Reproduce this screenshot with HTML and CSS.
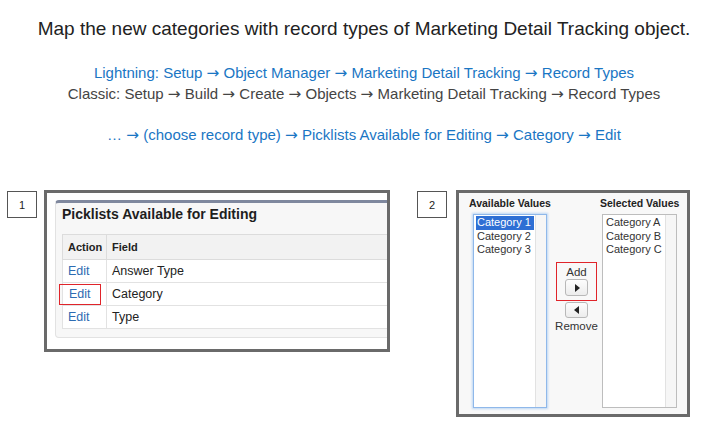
FILE: index.html
```html
<!DOCTYPE html>
<html>
<head>
<meta charset="utf-8">
<link rel="stylesheet" href="styles.css">
</head>
<body>
<div class="intro">
  <p class="title">Map the new categories with record types of Marketing Detail Tracking object.</p>
  <p class="path blue">Lightning: Setup <span class="ar">→</span> Object Manager <span class="ar">→</span> Marketing Detail Tracking <span class="ar">→</span> Record Types</p>
  <p class="path gray">Classic: Setup <span class="ar">→</span> Build <span class="ar">→</span> Create <span class="ar">→</span> Objects <span class="ar">→</span> Marketing Detail Tracking <span class="ar">→</span> Record Types</p>
  <p class="path blue last">… <span class="ar">→</span> (choose record type) <span class="ar">→</span> Picklists Available for Editing <span class="ar">→</span> Category <span class="ar">→</span> Edit</p>
</div>
<div class="steps">
  <div class="step step1">
    <div class="num">1</div>
    <div class="frame frame1">
      <div class="panel">
        <div class="panel-title">Picklists Available for Editing</div>
        <table class="pick">
          <tr class="head"><th class="c1">Action</th><th>Field</th></tr>
          <tr><td class="c1"><span class="edit">Edit</span></td><td>Answer Type</td></tr>
          <tr><td class="c1"><span class="edit hl">Edit</span></td><td>Category</td></tr>
          <tr><td class="c1"><span class="edit">Edit</span></td><td>Type</td></tr>
        </table>
      </div>
    </div>
  </div>
  <div class="step step2">
    <div class="num">2</div>
    <div class="frame frame2">
      <div class="col left">
        <div class="label">Available Values</div>
        <div class="listbox focus">
          <div class="items">
            <div class="item sel">Category 1</div>
            <div class="item">Category 2</div>
            <div class="item">Category 3</div>
          </div>
          <div class="track"></div>
        </div>
      </div>
      <div class="col mid">
        <div class="addbox">
          <div class="btn-label">Add</div>
          <div class="btn"><span class="tri right"></span></div>
        </div>
        <div class="btn rm"><span class="tri lefttri"></span></div>
        <div class="btn-label">Remove</div>
      </div>
      <div class="col right">
        <div class="label">Selected Values</div>
        <div class="listbox">
          <div class="items">
            <div class="item">Category A</div>
            <div class="item">Category B</div>
            <div class="item">Category C</div>
          </div>
          <div class="track"></div>
        </div>
      </div>
    </div>
  </div>
</div>
</body>
</html>
```
FILE: styles.css
```css
* { box-sizing: border-box; }
html, body { margin: 0; padding: 0; background: #fff; }
body {
  font-family: "Liberation Sans", Arial, sans-serif;
  width: 706px;
  height: 429px;
  overflow: hidden;
}
p { margin: 0; }
.intro {
  padding: 18px 0 0 22px;
  text-align: center;
}
.title {
  font-size: 19px;
  line-height: 22px;
  color: #222;
  margin-bottom: 22px;
}
.path {
  font-size: 15px;
  line-height: 21px;
  height: 21px;
}
.ar { font-family: "DejaVu Sans", sans-serif; font-size: 1.02em; line-height: 1; }
.blue { color: #1a76c4; }
.gray { color: #444; }
.path.last { margin-top: 20px; }

.steps {
  display: flex;
  align-items: flex-start;
  padding: 45px 0 0 7px;
}
.step { display: flex; align-items: flex-start; }
.num {
  width: 30px;
  height: 27px;
  margin-top: 1px;
  border: 1.5px solid #555;
  font-size: 11px;
  color: #222;
  display: flex;
  align-items: center;
  justify-content: center;
}
.step1 .num { margin-right: 7px; }
.step2 { margin-left: 27px; }
.step2 .num { margin-right: 9px; }

.frame {
  border: 3px solid #6a6a6a;
  overflow: hidden;
}
.frame1 {
  width: 346px;
  height: 162px;
  padding: 7px 0 0 8px;
  background: #fff;
}
.panel {
  width: 360px;
  height: 138px;
  background: #f7f7f7;
  border: 1px solid #e2e2e2;
  border-top: 3px solid #7f889e;
  border-radius: 4px;
  padding: 0 0 0 6px;
}
.panel-title {
  font-weight: bold;
  font-size: 14px;
  color: #1e1e1e;
  height: 31px;
  line-height: 23px;
}
.pick {
  border-collapse: collapse;
  width: 360px;
  font-size: 12.5px;
  color: #222;
}
.pick th, .pick td {
  border: 1px solid #e2e2e2;
  text-align: left;
  padding: 0 0 0 5px;
  height: 23px;
  background: #fff;
}
.pick tr.head th {
  background: #f2f2f2;
  font-weight: bold;
  font-size: 11px;
  height: 25px;
  border-color: #dcdcdc;
}
.pick th.c1, .pick td.c1 { width: 44px; }
.pick td.c1 { padding-left: 0; }
.edit {
  color: #2d6bb2;
  display: inline-block;
  vertical-align: middle;
  padding: 0 7px;
  line-height: 19px;
  border: 1.5px solid transparent;
  margin-left: -3px;
}
.edit.hl { border-color: #e0242a; padding: 0 9px; margin-left: -4px; }

.frame2 {
  width: 234px;
  height: 227px;
  background: #f8f8f8;
  display: flex;
  padding: 2px 0 0 10px;
}
.label {
  font-weight: bold;
  font-size: 10.5px;
  color: #222;
  line-height: 16px;
  height: 19px;
  white-space: nowrap;
}
.col.left { width: 78px; }
.col.left .listbox { margin-left: 4px; }
.col.right { width: 80px; }
.col.right .label { margin-left: -2px; }
.listbox {
  width: 75px;
  height: 194px;
  background: #fff;
  border: 1px solid #bdbdbd;
  display: flex;
}
.listbox.focus {
  width: 74px;
  border-color: #8fb8ea;
  box-shadow: 0 0 2px 1px #bcd6f4;
}
.items { flex: 1; padding: 1px 1px 0 2px; min-width: 0; }
.item {
  font-size: 11px;
  line-height: 13.5px;
  color: #333;
  padding-left: 1px;
  white-space: nowrap;
}
.item.sel { background: #2e6fd4; color: #fff; }
.track {
  width: 11px;
  flex: none;
  background: #f6f6f6;
  border-left: 1px solid #e2e2e2;
}
.col.mid {
  width: 55px;
  display: flex;
  flex-direction: column;
  align-items: center;
  padding: 67px 0 0 4px;
}
.addbox {
  width: 41px;
  height: 39px;
  border: 1.5px solid #e0242a;
  display: flex;
  flex-direction: column;
  align-items: center;
  margin-bottom: 1px;
}
.btn-label { font-size: 11.5px; color: #333; line-height: 14px; }
.addbox .btn-label { margin-top: 2px; }
.btn {
  width: 23px;
  height: 17px;
  border: 1px solid #b8b8b8;
  border-radius: 3px;
  background: linear-gradient(#fdfdfd, #ececec);
  display: flex;
  align-items: center;
  justify-content: center;
}
.btn.rm { height: 16px; margin-bottom: 1px; }
.tri { width: 0; height: 0; border-top: 4px solid transparent; border-bottom: 4px solid transparent; }
.tri.right { border-left: 5px solid #222; margin-left: 1px; }
.tri.lefttri { border-right: 5px solid #222; margin-right: 1px; }
```
